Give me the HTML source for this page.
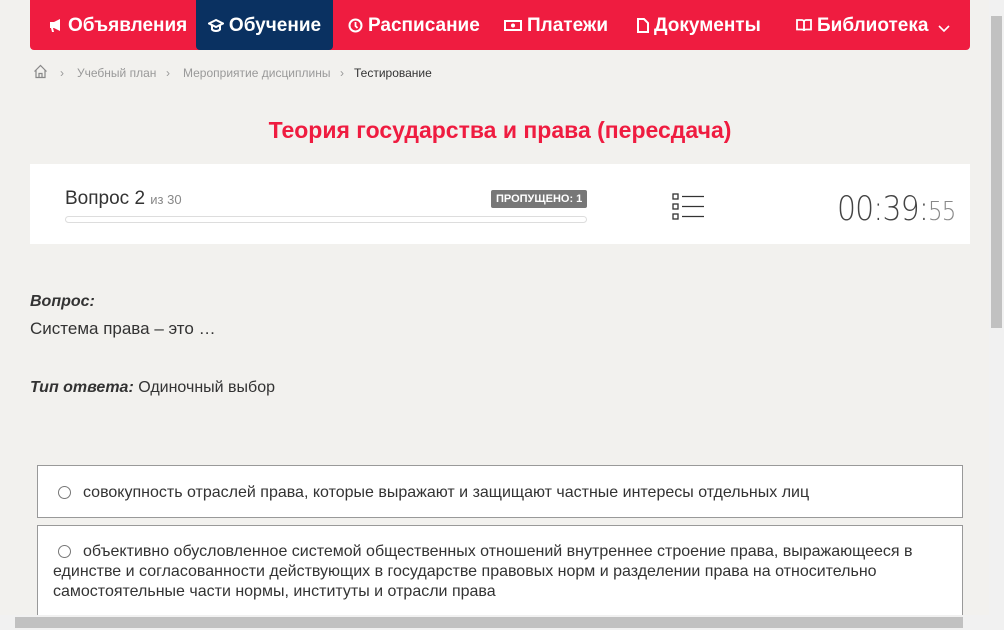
<!DOCTYPE html>
<html><head><meta charset="utf-8"><style>
body{margin:0;width:1004px;height:630px;overflow:hidden;background:#f2f1ee;font-family:"Liberation Sans",sans-serif;position:relative}
.nav{position:absolute;left:30px;top:0;width:940px;height:50px;background:#ef1c40;border-radius:0 0 4px 4px}
.nav div{position:absolute;top:0;height:50px;line-height:52px;color:#fff;font-size:19px;font-weight:bold;white-space:nowrap}
.nav svg{vertical-align:-2px;margin-right:5px}
.act{background:#0a3161;border-radius:0 0 4px 4px}
.bc{position:absolute;top:66px;left:77px;font-size:12px;color:#999}
h1{position:absolute;top:117px;left:0;width:1000px;text-align:center;margin:0;font-size:23px;color:#ef1c40;font-weight:bold}
.card{position:absolute;left:30px;top:164px;width:940px;height:80px;background:#fff}
.opt{position:absolute;left:37px;width:924px;background:#fff;border:1px solid #999;font-size:16px;color:#333;line-height:20px}
.rad{display:inline-block;width:11px;height:11px;border:1px solid #777;border-radius:50%;vertical-align:-2px;margin-right:12px;background:#fff}
</style></head><body>
<div class="nav">
<div style="left:18px"><svg width="15" height="15" viewBox="0 0 15 15"><path d="M2 4h4l6-3v12l-6-3H5l1 4H4l-1-4H2z" fill="#fff"/></svg>Объявления</div>
<div class="act" style="left:166px;width:137px;text-align:center"><svg width="16" height="15" viewBox="0 0 16 15"><path d="M8 2L1 5.5 8 9l7-3.5z" fill="none" stroke="#fff" stroke-width="2"/><path d="M4 7.5v4c2 2 6 2 8 0v-4" fill="none" stroke="#fff" stroke-width="2"/></svg>Обучение</div>
<div style="left:318px"><svg width="15" height="15" viewBox="0 0 15 15"><circle cx="7.5" cy="7.5" r="6" fill="none" stroke="#fff" stroke-width="2"/><path d="M7.5 4v4l2 2" fill="none" stroke="#fff" stroke-width="1.8"/></svg>Расписание</div>
<div style="left:474px"><svg width="18" height="15" viewBox="0 0 18 15"><rect x="1" y="3" width="16" height="9" fill="none" stroke="#fff" stroke-width="2"/><circle cx="9" cy="7.5" r="2" fill="#fff"/></svg>Платежи</div>
<div style="left:606px"><svg width="13" height="15" viewBox="0 0 13 15"><path d="M2 1h6l4 4v9H2z" fill="none" stroke="#fff" stroke-width="2"/></svg>Документы</div>
<div style="left:766px"><svg width="16" height="15" viewBox="0 0 16 15"><path d="M1 2h5c1 0 2 1 2 2v9c0-1-1-1.5-2-1.5H1zM15 2h-5c-1 0-2 1-2 2v9c0-1 1-1.5 2-1.5h5z" fill="none" stroke="#fff" stroke-width="1.8"/></svg>Библиотека <svg width="12" height="10" viewBox="0 0 12 10" style="margin-left:4px"><path d="M1 3l5 5 5-5" fill="none" stroke="#fff" stroke-width="1.6"/></svg></div>
</div>
<svg style="position:absolute;left:33px;top:64px" width="15" height="15" viewBox="0 0 15 15"><path d="M1.5 7.5L7.5 1.5L13.5 7.5M3 6v7.5h9V6M6 13.5v-4h3v4" fill="none" stroke="#888" stroke-width="1.2"/></svg>
<div class="bc"><span style="position:absolute;left:-17px">›</span>Учебный план<span style="position:absolute;left:89px">›</span><span style="position:absolute;left:106px;white-space:nowrap">Мероприятие дисциплины</span><span style="position:absolute;left:263px">›</span><span style="position:absolute;left:277px;color:#333">Тестирование</span></div>
<h1>Теория государства и права (пересдача)</h1>
<div class="card">
<div style="position:absolute;left:35px;top:24px;font-size:19px;color:#333">Вопрос 2 <span style="font-size:13px;color:#888">из 30</span></div>
<div style="position:absolute;left:461px;top:26px;background:#777;color:#fff;font-size:11px;font-weight:bold;padding:3px 5px;border-radius:2px">ПРОПУЩЕНО: 1</div>
<div style="position:absolute;left:35px;top:52px;width:520px;height:5px;border:1px solid #ddd;border-radius:4px"></div>
<svg style="position:absolute;left:642px;top:29px" width="32" height="28"><g fill="none" stroke="#333" stroke-width="1.3"><rect x="1" y="1" width="5" height="5"/><rect x="1" y="11" width="5" height="5"/><rect x="1" y="21" width="5" height="5"/><path d="M10 3.5h22M10 13.5h22M10 23.5h22"/></g></svg>
<div style="position:absolute;left:807px;top:25px;font-size:34px;color:#444;letter-spacing:-1px;font-family:'DejaVu Sans',sans-serif;font-weight:200;transform:scaleX(0.88);transform-origin:left">00:39:<span style="font-size:26px;color:#888">55</span></div>
</div>
<div style="position:absolute;left:30px;top:293px;font-size:16px;font-weight:bold;font-style:italic;color:#333">Вопрос:</div>
<div style="position:absolute;left:30px;top:319px;font-size:17px;color:#333">Система права – это …</div>
<div style="position:absolute;left:30px;top:379px;font-size:16px;color:#333"><b><i>Тип ответа:</i></b> Одиночный выбор</div>
<div class="opt" style="top:465px;height:51px"><div style="padding:17px 15px 0 20px"><span class="rad"></span>совокупность отраслей права, которые выражают и защищают частные интересы отдельных лиц</div></div>
<div class="opt" style="top:525px;height:100px"><div style="padding:16px 15px 0 15px"><span class="rad" style="margin-left:5px"></span>объективно обусловленное системой общественных отношений внутреннее строение права, выражающееся в единстве и согласованности действующих в государстве правовых норм и разделении права на относительно самостоятельные части нормы, институты и отрасли права</div></div>
<div style="position:absolute;left:989px;top:0;width:15px;height:630px;background:#f1f1f1"><div style="position:absolute;left:2px;top:16px;width:11px;height:312px;background:#c1c1c1"></div></div>
<div style="position:absolute;left:0;top:615px;width:989px;height:15px;background:#f1f1f1"><div style="position:absolute;left:15px;top:2px;width:948px;height:11px;background:#c1c1c1"></div></div>
</body></html>
